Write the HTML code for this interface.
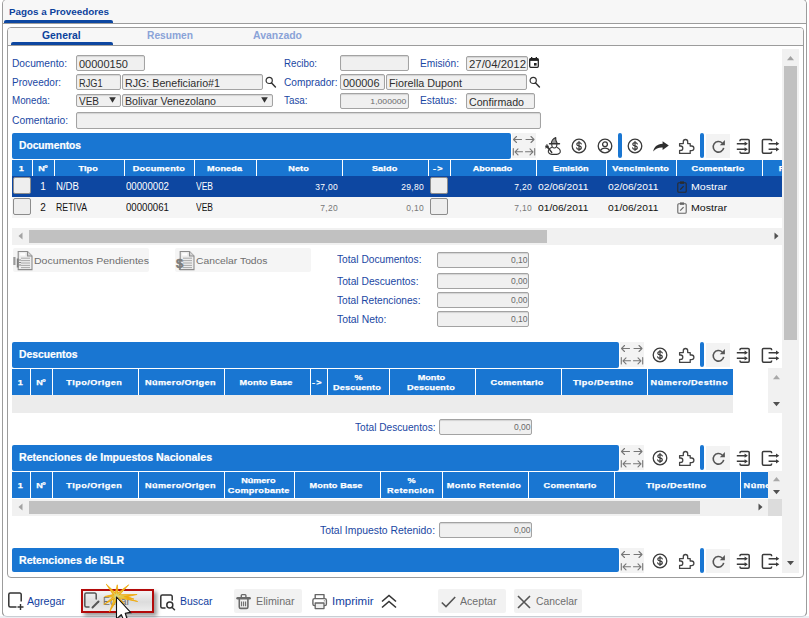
<!DOCTYPE html>
<html><head><meta charset="utf-8"><title>Pagos a Proveedores</title>
<style>
html,body{margin:0;padding:0;}
body{width:809px;height:618px;overflow:hidden;background:#fff;font-family:"Liberation Sans",sans-serif;font-size:11px;position:relative;}
.a{position:absolute;box-sizing:border-box;}
.t{white-space:nowrap;line-height:14px;height:14px;}
.lbl{color:#1a47a3;font-size:10px;}
.inp{background:#f0f0f0;border:1px solid #a3a3a3;border-radius:2px;color:#2e2e2e;font-size:10px;line-height:13px;padding:1.7px 0 0 2px;white-space:nowrap;overflow:hidden;box-shadow:inset 0 1px 1px rgba(0,0,0,0.12);}
.num{text-align:right;padding-right:0.7px;color:#6a6a6a;font-size:8.5px;letter-spacing:0.3px;}
.bar{background:#1976d2;border-radius:2px;}
.bart{color:#fff;font-weight:bold;font-size:10px;-webkit-text-stroke:0.2px #fff;}
.th{background:#1976d2;color:#fff;font-weight:bold;font-size:7.6px;text-align:center;display:flex;padding:1.6px 2.2px 0 0;-webkit-text-stroke:0.25px #fff;align-items:center;justify-content:center;line-height:10px;white-space:nowrap;overflow:hidden;}
.vb{background:#1976d2;border-radius:2px;}
.ibg{background:#f3f3f3;}
.chk{background:#eeeeee;border:1px solid #8c8c8c;border-radius:2px;}
.btn{background:#f2f2f2;border-radius:2px;}
.gtx{color:#6e6e6e;font-size:10px;}
.btx{color:#123e9e;font-size:10px;}
svg{position:absolute;overflow:visible;}
</style></head>
<body>
<div class="a " style="left:2px;top:-1px;width:805px;height:618px;border:1px solid #9c9c9c;border-bottom-color:#c9ced4;border-radius:5px;background:#fff;overflow:hidden;"><div class="a" style="left:0;top:0;width:100%;height:24px;background:#f7f7f7;border-bottom:1px solid #9c9c9c;"></div></div>
<div class="a " style="left:0px;top:616px;width:809px;height:2px;background:#eceff3;"></div>
<div class="a " style="left:2px;top:560px;width:805px;height:57px;border:1px solid #9c9c9c;border-top:none;border-bottom-color:#c9ced4;border-radius:0 0 5px 5px;"></div>
<div class="a t " style="left:9px;top:4.7px;color:#0c429c;font-weight:bold;font-size:9.4px;"><span style="display:inline-block;transform:scaleX(1.049);transform-origin:0 50%;">Pagos a Proveedores</span></div>
<div class="a " style="left:4px;top:20px;width:109px;height:3px;background:#0d47a1;border-radius:2px 2px 0 0;"></div>
<div class="a " style="left:7px;top:27px;width:797px;height:551px;border:1px solid #9c9c9c;border-radius:4px;background:#fff;overflow:hidden;"><div class="a" style="left:0;top:0;width:100%;height:18px;background:#f7f7f7;border-bottom:1px solid #9c9c9c;"></div></div>
<div class="a t " style="left:42px;top:29px;color:#0c429c;font-weight:bold;font-size:10px;"><span style="display:inline-block;transform:scaleX(1.036);transform-origin:0 50%;">General</span></div>
<div class="a t " style="left:146.5px;top:29px;color:#8aa3d8;font-weight:bold;font-size:10px;"><span style="display:inline-block;transform:scaleX(1.022);transform-origin:0 50%;">Resumen</span></div>
<div class="a t " style="left:253px;top:29px;color:#8aa3d8;font-weight:bold;font-size:10px;"><span style="display:inline-block;transform:scaleX(1.045);transform-origin:0 50%;">Avanzado</span></div>
<div class="a " style="left:11px;top:42px;width:102px;height:3px;background:#0d47a1;border-radius:2px 2px 0 0;"></div>
<div class="a t lbl" style="left:12px;top:56.5px;"><span style="display:inline-block;transform:scaleX(1.020);transform-origin:0 50%;">Documento:</span></div>
<div class="a t lbl" style="left:12px;top:75.5px;"><span style="display:inline-block;transform:scaleX(1.002);transform-origin:0 50%;">Proveedor:</span></div>
<div class="a t lbl" style="left:12px;top:94px;"><span style="display:inline-block;transform:scaleX(0.976);transform-origin:0 50%;">Moneda:</span></div>
<div class="a t lbl" style="left:12px;top:113.5px;"><span style="display:inline-block;transform:scaleX(1.028);transform-origin:0 50%;">Comentario:</span></div>
<div class="a t lbl" style="left:284px;top:56.7px;"><span style="display:inline-block;transform:scaleX(0.973);transform-origin:0 50%;">Recibo:</span></div>
<div class="a t lbl" style="left:284px;top:75.5px;"><span style="display:inline-block;transform:scaleX(1.013);transform-origin:0 50%;">Comprador:</span></div>
<div class="a t lbl" style="left:284px;top:94.2px;"><span style="display:inline-block;transform:scaleX(0.983);transform-origin:0 50%;">Tasa:</span></div>
<div class="a t lbl" style="left:420px;top:56.5px;"><span style="display:inline-block;transform:scaleX(1.017);transform-origin:0 50%;">Emisión:</span></div>
<div class="a t lbl" style="left:420px;top:94.2px;"><span style="display:inline-block;transform:scaleX(1.024);transform-origin:0 50%;">Estatus:</span></div>
<div class="a inp" style="left:76px;top:55px;width:69px;height:16px;"><span style="display:inline-block;transform:scaleX(1.101);transform-origin:0 50%;">00000150</span></div>
<div class="a inp" style="left:76px;top:74px;width:45px;height:16px;"><span style="display:inline-block;transform:scaleX(0.919);transform-origin:0 50%;">RJG1</span></div>
<div class="a inp" style="left:122px;top:74px;width:141px;height:16px;"><span style="display:inline-block;transform:scaleX(1.068);transform-origin:0 50%;">RJG: Beneficiario#1</span></div>
<div class="a inp" style="left:76px;top:94px;width:45px;height:13px;line-height:11px;padding-top:1.4px;"><span style="display:inline-block;transform:scaleX(0.999);transform-origin:0 50%;">VEB</span><svg style="right:4px;top:2.2px" width="7" height="6" viewBox="0 0 7 6"><path d="M0.2 0.2H6.8L3.5 5.8Z" fill="#333"/></svg></div>
<div class="a inp" style="left:122px;top:94px;width:151px;height:13px;line-height:11px;padding-top:1.4px;"><span style="display:inline-block;transform:scaleX(1.063);transform-origin:0 50%;">Bolivar Venezolano</span><svg style="right:4px;top:2.2px" width="7" height="6" viewBox="0 0 7 6"><path d="M0.2 0.2H6.8L3.5 5.8Z" fill="#333"/></svg></div>
<div class="a inp" style="left:76px;top:112px;width:465px;height:17px;"></div>
<div class="a inp" style="left:340px;top:55px;width:69px;height:16px;"></div>
<div class="a inp" style="left:340px;top:74px;width:45px;height:16px;"><span style="display:inline-block;transform:scaleX(1.094);transform-origin:0 50%;">000006</span></div>
<div class="a inp" style="left:386px;top:74px;width:141px;height:16px;"><span style="display:inline-block;transform:scaleX(1.076);transform-origin:0 50%;">Fiorella Dupont</span></div>
<div class="a inp num" style="left:340px;top:93px;width:69px;height:16px;font-size:8px;line-height:13px;padding-top:1px;letter-spacing:0;padding-right:1.5px;"><span style="display:inline-block;transform:scaleX(1.079);transform-origin:100% 50%;">1,000000</span></div>
<div class="a inp" style="left:466px;top:56px;width:62px;height:15px;padding-top:0.7px;line-height:13px;"><span style="display:inline-block;transform:scaleX(1.139);transform-origin:0 50%;">27/04/2012</span></div>
<div class="a inp" style="left:466px;top:93px;width:69px;height:16px;"><span style="display:inline-block;transform:scaleX(1.064);transform-origin:0 50%;">Confirmado</span></div>
<svg style="left:265px;top:76px" width="12" height="12" viewBox="0 0 12 12"><circle cx="4.2" cy="4.4" r="3.1" fill="none" stroke="#333" stroke-width="1.2"/><path d="M6.6 6.9 L10.4 10.9" stroke="#333" stroke-width="1.5" stroke-linecap="round"/></svg>
<svg style="left:529px;top:76px" width="12" height="12" viewBox="0 0 12 12"><circle cx="4.2" cy="4.4" r="3.1" fill="none" stroke="#333" stroke-width="1.2"/><path d="M6.6 6.9 L10.4 10.9" stroke="#333" stroke-width="1.5" stroke-linecap="round"/></svg>
<svg style="left:529px;top:57px" width="10" height="11" viewBox="0 0 10 11"><rect x="0.7" y="1.7" width="8.6" height="8.6" rx="1" fill="none" stroke="#222" stroke-width="1.3"/><rect x="0.7" y="1.7" width="8.6" height="2.2" fill="#222"/><rect x="2" y="0" width="1.3" height="2" fill="#222"/><rect x="6.7" y="0" width="1.3" height="2" fill="#222"/><rect x="5" y="6" width="2.6" height="2.6" fill="#222"/></svg>
<div class="a bar" style="left:12px;top:133px;width:499px;height:26px;"></div>
<div class="a t bart" style="left:18.5px;top:139px;"><span style="display:inline-block;transform:scaleX(1.024);transform-origin:0 50%;">Documentos</span></div>
<div class="a ibg" style="left:512px;top:133px;width:24px;height:25px;"></div>
<svg style="left:512px;top:133px" width="24" height="25" viewBox="0 0 24 25" fill="none" stroke="#777" stroke-width="1.1" stroke-linecap="round" stroke-linejoin="round"><path d="M1.5 6.5H9.5M4.5 3.5L1.5 6.5L4.5 9.5"/><path d="M14 6.5H22M19 3.5L22 6.5L19 9.5"/><path d="M1.3 15.5V22M3 18.8H10.5M6 15.8L3 18.8L6 21.8"/><path d="M22.7 15.5V22M21 18.8H13.5M18 15.8L21 18.8L18 21.8"/></svg>
<svg style="left:544.6px;top:137.4px" width="17" height="18" viewBox="0 0 17 18" fill="none" stroke="#333" stroke-width="1.1" stroke-linejoin="round" stroke-linecap="round"><path d="M6.3 6.5C6.6 3.8 8.3 1.6 10.8 0.6C10.2 2.6 11.2 4.6 12.3 6.5Z" fill="#999"/><path d="M4.6 6.8H14.4" stroke-width="1.6"/><path d="M6.8 7.3C6.6 9.6 7.6 11 9.3 11C11 11 12 9.6 11.8 7.3"/><path d="M6.5 10.5C4.2 11.5 3 13.2 3.4 15.2C4 16.8 6.5 17.4 9.3 17.4C12.1 17.4 14.6 16.8 15.2 15.2C15.6 13.2 14.4 11.5 12.1 10.5"/><path d="M2.3 9.5L6.8 15.5" stroke-width="1.3"/><path d="M2 7.6L2.4 9L3.8 9.2L2.6 10L2.9 11.4L1.8 10.5L0.6 11.2L1.1 9.9L0.2 9L1.5 8.9Z" fill="#333" stroke-width="0.6"/></svg>
<svg style="left:570.5px;top:138px" width="16" height="16" viewBox="0 0 16 16"><circle cx="8" cy="8" r="6.8" fill="none" stroke="#3a3a3a" stroke-width="1.3"/><path d="M10.3 5.9C10 5 9.2 4.6 8 4.6C6.7 4.6 5.8 5.2 5.8 6.2C5.8 7.2 6.6 7.6 8 7.9C9.5 8.2 10.3 8.7 10.3 9.7C10.3 10.8 9.3 11.4 8 11.4C6.7 11.4 5.8 10.9 5.6 9.9M8 3.4V12.6" fill="none" stroke="#3a3a3a" stroke-width="1.2" stroke-linecap="round"/></svg>
<svg style="left:596.5px;top:138px" width="16" height="16" viewBox="0 0 16 16" fill="none" stroke="#3a3a3a" stroke-width="1.3"><circle cx="8" cy="8" r="6.8"/><circle cx="8" cy="6.3" r="2.4"/><path d="M3.4 12.7C4.4 10.9 6 10.2 8 10.2C10 10.2 11.6 10.9 12.6 12.7"/></svg>
<div class="a vb" style="left:618px;top:133px;width:4px;height:25px;"></div>
<svg style="left:626.5px;top:138px" width="16" height="16" viewBox="0 0 16 16"><circle cx="8" cy="8" r="6.8" fill="none" stroke="#3a3a3a" stroke-width="1.3"/><path d="M10.3 5.9C10 5 9.2 4.6 8 4.6C6.7 4.6 5.8 5.2 5.8 6.2C5.8 7.2 6.6 7.6 8 7.9C9.5 8.2 10.3 8.7 10.3 9.7C10.3 10.8 9.3 11.4 8 11.4C6.7 11.4 5.8 10.9 5.6 9.9M8 3.4V12.6" fill="none" stroke="#3a3a3a" stroke-width="1.2" stroke-linecap="round"/></svg>
<svg style="left:653px;top:141px" width="16" height="11" viewBox="0 0 16 11"><path d="M9.6 0.2L15.8 4.6L9.6 9V6.4C5.6 6.2 2.6 7.4 0.2 10.6C0.9 6.2 4 2.9 9.6 2.7Z" fill="#2e2e2e"/></svg>
<svg style="left:678px;top:139px" width="17" height="16" viewBox="678 139 17 16" fill="none" stroke="#444" stroke-width="1.3" stroke-linejoin="round"><path d="M679.6 143.6H683.3V141.7A2.2 2.2 0 0 1 687.7 141.7V143.6H690.2V146H691.6A2.3 2.3 0 0 1 691.6 150.6H690.2V153.4H679.6V150.4H680.6A2.2 2.2 0 0 0 680.6 146H679.6Z"/></svg>
<div class="a vb" style="left:700px;top:133px;width:4px;height:25px;"></div>
<div class="a ibg" style="left:706px;top:134px;width:24px;height:24px;"></div>
<svg style="left:706px;top:134px" width="24" height="24" viewBox="706 134 24 24" fill="none" stroke="#555" stroke-width="1.6"><path d="M722.2 143A5.3 5.3 0 1 0 723.7 147.9"/><path d="M719.8 145.2L724.9 140.1V145.2Z" fill="#555" stroke="none"/></svg>
<svg style="left:736px;top:138px" width="15" height="17" viewBox="736 138 15 17" fill="none" stroke="#3a3a3a" stroke-width="1.5" stroke-linejoin="round"><path d="M740 141.2V140.6C740 139.8 740.5 139.4 741.2 139.4H748C748.8 139.4 749.2 139.9 749.2 140.6V152C749.2 152.8 748.8 153.2 748 153.2H741.2C740.5 153.2 740 152.8 740 152V151.4"/><path d="M736.8 143.7H745M736.8 149.3H745" stroke-width="1.4"/><path d="M744.6 141.6L747.9 143.7L744.6 145.8ZM744.6 147.2L747.9 149.3L744.6 151.4Z" fill="#3a3a3a" stroke="none"/></svg>
<svg style="left:761px;top:138px" width="20" height="17" viewBox="761 138 20 17" fill="none" stroke="#3a3a3a" stroke-width="1.5" stroke-linejoin="round"><path d="M771.6 141.2V140.6C771.6 139.8 771.1 139.4 770.4 139.4H763.6C762.8 139.4 762.4 139.9 762.4 140.6V152C762.4 152.8 762.8 153.2 763.6 153.2H770.4C771.1 153.2 771.6 152.8 771.6 152V151.4"/><path d="M768.6 143.7H776.5M768.6 149.3H776.5" stroke-width="1.4"/><path d="M776 141.6L779.3 143.7L776 145.8ZM776 147.2L779.3 149.3L776 151.4Z" fill="#3a3a3a" stroke="none"/></svg>
<div class="a th" style="left:12px;top:160px;width:20px;height:16px;"><div><span style="display:inline-block;letter-spacing:-1.22px;transform:scaleX(1.200);transform-origin:50% 50%;">1</span></div></div>
<div class="a th" style="left:33px;top:160px;width:21px;height:16px;"><div><span style="display:inline-block;letter-spacing:-0.38px;transform:scaleX(1.200);transform-origin:50% 50%;">Nº</span></div></div>
<div class="a th" style="left:55px;top:160px;width:69px;height:16px;"><div><span style="display:inline-block;letter-spacing:0.09px;transform:scaleX(1.200);transform-origin:50% 50%;">Tipo</span></div></div>
<div class="a th" style="left:125px;top:160px;width:69px;height:16px;"><div><span style="display:inline-block;letter-spacing:0.22px;transform:scaleX(1.200);transform-origin:50% 50%;">Documento</span></div></div>
<div class="a th" style="left:195px;top:160px;width:61px;height:16px;"><div><span style="display:inline-block;letter-spacing:0.08px;transform:scaleX(1.200);transform-origin:50% 50%;">Moneda</span></div></div>
<div class="a th" style="left:257px;top:160px;width:85px;height:16px;"><div><span style="display:inline-block;letter-spacing:0.05px;transform:scaleX(1.200);transform-origin:50% 50%;">Neto</span></div></div>
<div class="a th" style="left:343px;top:160px;width:85px;height:16px;"><div><span style="display:inline-block;letter-spacing:0.11px;transform:scaleX(1.200);transform-origin:50% 50%;">Saldo</span></div></div>
<div class="a th" style="left:429px;top:160px;width:21px;height:16px;"><div><span style="display:inline-block;letter-spacing:0.93px;transform:scaleX(1.200);transform-origin:50% 50%;">-&gt;</span></div></div>
<div class="a th" style="left:451px;top:160px;width:85px;height:16px;"><div><span style="display:inline-block;letter-spacing:0.00px;transform:scaleX(1.200);transform-origin:50% 50%;">Abonado</span></div></div>
<div class="a th" style="left:537px;top:160px;width:69px;height:16px;"><div><span style="display:inline-block;letter-spacing:0.02px;transform:scaleX(1.200);transform-origin:50% 50%;">Emisión</span></div></div>
<div class="a th" style="left:607px;top:160px;width:69px;height:16px;"><div><span style="display:inline-block;letter-spacing:0.25px;transform:scaleX(1.200);transform-origin:50% 50%;">Vencimiento</span></div></div>
<div class="a th" style="left:677px;top:160px;width:85px;height:16px;"><div><span style="display:inline-block;letter-spacing:0.20px;transform:scaleX(1.200);transform-origin:50% 50%;">Comentario</span></div></div>
<div class="a th" style="left:763px;top:160px;width:19px;height:16px;justify-content:flex-start;padding-left:16.2px;"><div><span style="display:inline-block;letter-spacing:-1.34px;transform:scaleX(1.200);transform-origin:50% 50%;">F</span></div></div>
<div class="a " style="left:12px;top:176px;width:770px;height:21px;background:#0d47a1;"></div>
<div class="a " style="left:12px;top:197px;width:770px;height:21px;background:#f5f5f5;"></div>
<div class="a chk" style="left:13px;top:177px;width:18px;height:17px;"></div>
<div class="a chk" style="left:13px;top:198px;width:18px;height:17px;"></div>
<div class="a chk" style="left:430px;top:177px;width:18px;height:17px;"></div>
<div class="a chk" style="left:430px;top:198px;width:18px;height:17px;"></div>
<div class="a t " style="left:33px;top:180.4px;width:12.7px;color:#fff;font-size:10px;text-align:right;">1</div>
<div class="a t " style="left:55.5px;top:180.4px;color:#fff;font-size:10px;"><span style="display:inline-block;transform:scaleX(0.962);transform-origin:0 50%;">N/DB</span></div>
<div class="a t " style="left:126px;top:180.4px;color:#fff;font-size:10px;"><span style="display:inline-block;transform:scaleX(0.966);transform-origin:0 50%;">00000002</span></div>
<div class="a t " style="left:195.5px;top:180.4px;color:#fff;font-size:10px;"><span style="display:inline-block;transform:scaleX(0.849);transform-origin:0 50%;">VEB</span></div>
<div class="a t " style="left:287px;top:180.4px;width:51px;color:#fff;font-size:8.5px;text-align:right;letter-spacing:0.3px;">37,00</div>
<div class="a t " style="left:373px;top:180.4px;width:51px;color:#fff;font-size:8.5px;text-align:right;letter-spacing:0.3px;">29,80</div>
<div class="a t " style="left:481px;top:180.4px;width:51px;color:#fff;font-size:8.5px;text-align:right;letter-spacing:0.3px;">7,20</div>
<div class="a t " style="left:538px;top:179.8px;color:#fff;font-size:9.6px;"><span style="display:inline-block;transform:scaleX(1.067);transform-origin:0 50%;">02/06/2011</span></div>
<div class="a t " style="left:608px;top:179.8px;color:#fff;font-size:9.6px;"><span style="display:inline-block;transform:scaleX(1.067);transform-origin:0 50%;">02/06/2011</span></div>
<svg style="left:677px;top:181.0px" width="10" height="12" viewBox="0 0 10 12" fill="none" stroke="#2b2b2b" stroke-width="1.1"><rect x="0.8" y="1.8" width="8.4" height="9.4" rx="1"/><rect x="3" y="0.4" width="4" height="2.4" fill="#2b2b2b" stroke="none"/><path d="M3.2 8.6L6.6 5.2" stroke-width="1.2"/></svg>
<div class="a t " style="left:690.5px;top:179.8px;color:#fff;font-size:9.6px;"><span style="display:inline-block;transform:scaleX(1.107);transform-origin:0 50%;">Mostrar</span></div>
<div class="a t " style="left:33px;top:201.4px;width:12.7px;color:#111;font-size:10px;text-align:right;">2</div>
<div class="a t " style="left:55.5px;top:201.4px;color:#111;font-size:10px;"><span style="display:inline-block;transform:scaleX(0.876);transform-origin:0 50%;">RETIVA</span></div>
<div class="a t " style="left:126px;top:201.4px;color:#111;font-size:10px;"><span style="display:inline-block;transform:scaleX(0.966);transform-origin:0 50%;">00000061</span></div>
<div class="a t " style="left:195.5px;top:201.4px;color:#111;font-size:10px;"><span style="display:inline-block;transform:scaleX(0.849);transform-origin:0 50%;">VEB</span></div>
<div class="a t " style="left:287px;top:201.4px;width:51px;color:#777;font-size:8.5px;text-align:right;letter-spacing:0.3px;">7,20</div>
<div class="a t " style="left:373px;top:201.4px;width:51px;color:#777;font-size:8.5px;text-align:right;letter-spacing:0.3px;">0,10</div>
<div class="a t " style="left:481px;top:201.4px;width:51px;color:#777;font-size:8.5px;text-align:right;letter-spacing:0.3px;">7,10</div>
<div class="a t " style="left:538px;top:200.8px;color:#111;font-size:9.6px;"><span style="display:inline-block;transform:scaleX(1.067);transform-origin:0 50%;">01/06/2011</span></div>
<div class="a t " style="left:608px;top:200.8px;color:#111;font-size:9.6px;"><span style="display:inline-block;transform:scaleX(1.067);transform-origin:0 50%;">01/06/2011</span></div>
<svg style="left:677px;top:202.0px" width="10" height="12" viewBox="0 0 10 12" fill="none" stroke="#666" stroke-width="1.1"><rect x="0.8" y="1.8" width="8.4" height="9.4" rx="1"/><rect x="3" y="0.4" width="4" height="2.4" fill="#666" stroke="none"/><path d="M3.2 8.6L6.6 5.2" stroke-width="1.2"/></svg>
<div class="a t " style="left:690.5px;top:200.8px;color:#111;font-size:9.6px;"><span style="display:inline-block;transform:scaleX(1.107);transform-origin:0 50%;">Mostrar</span></div>
<div class="a " style="left:12px;top:228px;width:770px;height:17px;background:#f1f1f1;"></div>
<div class="a " style="left:29px;top:230px;width:518px;height:13px;background:#c1c1c1;"></div>
<svg style="left:18px;top:232px" width="5" height="8" viewBox="0 0 5 8"><path d="M4.5 0.5L0.5 4L4.5 7.5Z" fill="#a3a3a3"/></svg>
<svg style="left:774px;top:232px" width="5" height="8" viewBox="0 0 5 8"><path d="M0.5 0.5L4.5 4L0.5 7.5Z" fill="#505050"/></svg>
<div class="a btn" style="left:13px;top:248px;width:136px;height:24px;background:#f5f5f5;"></div>
<div class="a btn" style="left:175px;top:248px;width:136px;height:24px;background:#f5f5f5;"></div>
<svg style="left:13px;top:248px" width="20" height="24" viewBox="0 0 20 24" fill="none" stroke="#8c8c8c" stroke-width="1.1" font-family="Liberation Sans"><path d="M5.2 3.5H14.5L19 8V21.6H5.2Z" fill="#ededed"/><path d="M14.5 3.5V8H19" fill="#d6d6d6"/><rect x="7.2" y="5.3" width="5" height="2.2" fill="#fff" stroke="none"/><path d="M8 10.2H17M8 12.6H17M8 15H17M8 17.4H17M8 19.6H17" stroke="#a8a8a8" stroke-width="1"/><rect x="0.3" y="9" width="2.2" height="8" fill="#9a9a9a" stroke="none"/><rect x="3.8" y="10.5" width="1.8" height="9" fill="#7f7f7f" stroke="none"/><path d="M5.6 12H8M5.6 14.5H8M5.6 17H8" stroke="#8a8a8a" stroke-width="1"/></svg>
<svg style="left:175px;top:248px" width="20" height="24" viewBox="0 0 20 24" fill="none" stroke="#8c8c8c" stroke-width="1.1" font-family="Liberation Sans"><path d="M5.2 3.5H14.5L19 8V21.6H5.2Z" fill="#ededed"/><path d="M14.5 3.5V8H19" fill="#d6d6d6"/><rect x="7.2" y="5.3" width="5" height="2.2" fill="#fff" stroke="none"/><path d="M8 10.2H17M8 12.6H17M8 15H17M8 17.4H17M8 19.6H17" stroke="#a8a8a8" stroke-width="1"/><text x="4.6" y="20.2" font-size="13" font-weight="bold" fill="#7d7d7d" stroke="#7d7d7d" stroke-width="0.5" text-anchor="middle" font-family="Liberation Sans">$</text></svg>
<div class="a t gtx" style="left:34px;top:254px;font-size:9.2px;"><span style="display:inline-block;transform:scaleX(1.149);transform-origin:0 50%;">Documentos Pendientes</span></div>
<div class="a t gtx" style="left:196px;top:254px;font-size:9.2px;"><span style="display:inline-block;transform:scaleX(1.123);transform-origin:0 50%;">Cancelar Todos</span></div>
<div class="a t lbl" style="left:337px;top:253px;"><span style="display:inline-block;transform:scaleX(1.020);transform-origin:0 50%;">Total Documentos:</span></div>
<div class="a inp num" style="left:437px;top:252px;width:92px;height:16px;line-height:13px;padding-top:0.8px;letter-spacing:0;"><span style="display:inline-block;transform:scaleX(1.003);transform-origin:100% 50%;">0,10</span></div>
<div class="a t lbl" style="left:337px;top:274.5px;"><span style="display:inline-block;transform:scaleX(1.025);transform-origin:0 50%;">Total Descuentos:</span></div>
<div class="a inp num" style="left:437px;top:273px;width:92px;height:16px;line-height:13px;padding-top:0.8px;letter-spacing:0;"><span style="display:inline-block;transform:scaleX(1.003);transform-origin:100% 50%;">0,00</span></div>
<div class="a t lbl" style="left:337px;top:294px;"><span style="display:inline-block;transform:scaleX(1.015);transform-origin:0 50%;">Total Retenciones:</span></div>
<div class="a inp num" style="left:437px;top:292px;width:92px;height:16px;line-height:13px;padding-top:0.8px;letter-spacing:0;"><span style="display:inline-block;transform:scaleX(1.003);transform-origin:100% 50%;">0,00</span></div>
<div class="a t lbl" style="left:337px;top:313px;"><span style="display:inline-block;transform:scaleX(1.035);transform-origin:0 50%;">Total Neto:</span></div>
<div class="a inp num" style="left:437px;top:311px;width:92px;height:16px;line-height:13px;padding-top:0.8px;letter-spacing:0;"><span style="display:inline-block;transform:scaleX(1.003);transform-origin:100% 50%;">0,10</span></div>
<div class="a bar" style="left:12px;top:342px;width:607px;height:26px;"></div>
<div class="a t bart" style="left:18.5px;top:348px;"><span style="display:inline-block;transform:scaleX(1.032);transform-origin:0 50%;">Descuentos</span></div>
<div class="a ibg" style="left:620px;top:342px;width:24px;height:25px;"></div>
<svg style="left:620px;top:342px" width="24" height="25" viewBox="0 0 24 25" fill="none" stroke="#777" stroke-width="1.1" stroke-linecap="round" stroke-linejoin="round"><path d="M1.5 6.5H9.5M4.5 3.5L1.5 6.5L4.5 9.5"/><path d="M14 6.5H22M19 3.5L22 6.5L19 9.5"/><path d="M1.3 15.5V22M3 18.8H10.5M6 15.8L3 18.8L6 21.8"/><path d="M22.7 15.5V22M21 18.8H13.5M18 15.8L21 18.8L18 21.8"/></svg>
<svg style="left:652px;top:347px" width="16" height="16" viewBox="0 0 16 16"><circle cx="8" cy="8" r="6.8" fill="none" stroke="#3a3a3a" stroke-width="1.3"/><path d="M10.3 5.9C10 5 9.2 4.6 8 4.6C6.7 4.6 5.8 5.2 5.8 6.2C5.8 7.2 6.6 7.6 8 7.9C9.5 8.2 10.3 8.7 10.3 9.7C10.3 10.8 9.3 11.4 8 11.4C6.7 11.4 5.8 10.9 5.6 9.9M8 3.4V12.6" fill="none" stroke="#3a3a3a" stroke-width="1.2" stroke-linecap="round"/></svg>
<svg style="left:678px;top:348px" width="17" height="16" viewBox="678 139 17 16" fill="none" stroke="#444" stroke-width="1.3" stroke-linejoin="round"><path d="M679.6 143.6H683.3V141.7A2.2 2.2 0 0 1 687.7 141.7V143.6H690.2V146H691.6A2.3 2.3 0 0 1 691.6 150.6H690.2V153.4H679.6V150.4H680.6A2.2 2.2 0 0 0 680.6 146H679.6Z"/></svg>
<div class="a vb" style="left:700px;top:342px;width:4px;height:25px;"></div>
<div class="a ibg" style="left:706px;top:343px;width:24px;height:24px;"></div>
<svg style="left:706px;top:343px" width="24" height="24" viewBox="706 134 24 24" fill="none" stroke="#555" stroke-width="1.6"><path d="M722.2 143A5.3 5.3 0 1 0 723.7 147.9"/><path d="M719.8 145.2L724.9 140.1V145.2Z" fill="#555" stroke="none"/></svg>
<svg style="left:736px;top:347px" width="15" height="17" viewBox="736 138 15 17" fill="none" stroke="#3a3a3a" stroke-width="1.5" stroke-linejoin="round"><path d="M740 141.2V140.6C740 139.8 740.5 139.4 741.2 139.4H748C748.8 139.4 749.2 139.9 749.2 140.6V152C749.2 152.8 748.8 153.2 748 153.2H741.2C740.5 153.2 740 152.8 740 152V151.4"/><path d="M736.8 143.7H745M736.8 149.3H745" stroke-width="1.4"/><path d="M744.6 141.6L747.9 143.7L744.6 145.8ZM744.6 147.2L747.9 149.3L744.6 151.4Z" fill="#3a3a3a" stroke="none"/></svg>
<svg style="left:761px;top:347px" width="20" height="17" viewBox="761 138 20 17" fill="none" stroke="#3a3a3a" stroke-width="1.5" stroke-linejoin="round"><path d="M771.6 141.2V140.6C771.6 139.8 771.1 139.4 770.4 139.4H763.6C762.8 139.4 762.4 139.9 762.4 140.6V152C762.4 152.8 762.8 153.2 763.6 153.2H770.4C771.1 153.2 771.6 152.8 771.6 152V151.4"/><path d="M768.6 143.7H776.5M768.6 149.3H776.5" stroke-width="1.4"/><path d="M776 141.6L779.3 143.7L776 145.8ZM776 147.2L779.3 149.3L776 151.4Z" fill="#3a3a3a" stroke="none"/></svg>
<div class="a th" style="left:12px;top:369px;width:18px;height:26px;"><div><span style="display:inline-block;letter-spacing:-1.22px;transform:scaleX(1.200);transform-origin:50% 50%;">1</span></div></div>
<div class="a th" style="left:31px;top:369px;width:21px;height:26px;"><div><span style="display:inline-block;letter-spacing:-0.38px;transform:scaleX(1.200);transform-origin:50% 50%;">Nº</span></div></div>
<div class="a th" style="left:53px;top:369px;width:85px;height:26px;"><div><span style="display:inline-block;letter-spacing:0.38px;transform:scaleX(1.200);transform-origin:50% 50%;">Tipo/Origen</span></div></div>
<div class="a th" style="left:139px;top:369px;width:85px;height:26px;"><div><span style="display:inline-block;letter-spacing:0.28px;transform:scaleX(1.200);transform-origin:50% 50%;">Número/Origen</span></div></div>
<div class="a th" style="left:225px;top:369px;width:85px;height:26px;"><div><span style="display:inline-block;letter-spacing:0.11px;transform:scaleX(1.200);transform-origin:50% 50%;">Monto Base</span></div></div>
<div class="a th" style="left:311px;top:369px;width:16px;height:26px;"><div><span style="display:inline-block;letter-spacing:0.93px;transform:scaleX(1.200);transform-origin:50% 50%;">-&gt;</span></div></div>
<div class="a th" style="left:328px;top:369px;width:61px;height:26px;"><div><span style="display:inline-block;letter-spacing:-1.95px;transform:scaleX(1.200);transform-origin:50% 50%;">%</span><br><span style="display:inline-block;letter-spacing:0.13px;transform:scaleX(1.200);transform-origin:50% 50%;">Descuento</span></div></div>
<div class="a th" style="left:390px;top:369px;width:85px;height:26px;"><div><span style="display:inline-block;letter-spacing:-0.01px;transform:scaleX(1.200);transform-origin:50% 50%;">Monto</span><br><span style="display:inline-block;letter-spacing:0.13px;transform:scaleX(1.200);transform-origin:50% 50%;">Descuento</span></div></div>
<div class="a th" style="left:476px;top:369px;width:85px;height:26px;"><div><span style="display:inline-block;letter-spacing:0.20px;transform:scaleX(1.200);transform-origin:50% 50%;">Comentario</span></div></div>
<div class="a th" style="left:562px;top:369px;width:85px;height:26px;"><div><span style="display:inline-block;letter-spacing:0.39px;transform:scaleX(1.200);transform-origin:50% 50%;">Tipo/Destino</span></div></div>
<div class="a th" style="left:648px;top:369px;width:85px;height:26px;"><div><span style="display:inline-block;letter-spacing:0.42px;transform:scaleX(1.200);transform-origin:50% 50%;">Número/Destino</span></div></div>
<div class="a " style="left:12px;top:395px;width:721px;height:18px;background:#ececec;"></div>
<div class="a " style="left:768px;top:368px;width:14px;height:45px;background:#f1f1f1;"></div>
<svg style="left:773px;top:374.8px" width="7" height="5" viewBox="0 0 7 5"><path d="M0 4.2L3.5 0L7 4.2Z" fill="#a8a8a8"/></svg>
<svg style="left:773px;top:401.9px" width="7" height="5" viewBox="0 0 7 5"><path d="M0 0L3.5 4.2L7 0Z" fill="#505050"/></svg>
<div class="a t lbl" style="left:354.5px;top:420.5px;"><span style="display:inline-block;transform:scaleX(1.013);transform-origin:0 50%;">Total Descuentos:</span></div>
<div class="a inp num" style="left:439px;top:419px;width:93px;height:16px;line-height:13px;padding-top:0.8px;letter-spacing:0;"><span style="display:inline-block;transform:scaleX(1.003);transform-origin:100% 50%;">0,00</span></div>
<div class="a bar" style="left:12px;top:445px;width:607px;height:26px;"></div>
<div class="a t bart" style="left:18.5px;top:451px;"><span style="display:inline-block;transform:scaleX(1.059);transform-origin:0 50%;">Retenciones de Impuestos Nacionales</span></div>
<div class="a ibg" style="left:620px;top:445px;width:24px;height:25px;"></div>
<svg style="left:620px;top:445px" width="24" height="25" viewBox="0 0 24 25" fill="none" stroke="#777" stroke-width="1.1" stroke-linecap="round" stroke-linejoin="round"><path d="M1.5 6.5H9.5M4.5 3.5L1.5 6.5L4.5 9.5"/><path d="M14 6.5H22M19 3.5L22 6.5L19 9.5"/><path d="M1.3 15.5V22M3 18.8H10.5M6 15.8L3 18.8L6 21.8"/><path d="M22.7 15.5V22M21 18.8H13.5M18 15.8L21 18.8L18 21.8"/></svg>
<svg style="left:652px;top:450px" width="16" height="16" viewBox="0 0 16 16"><circle cx="8" cy="8" r="6.8" fill="none" stroke="#3a3a3a" stroke-width="1.3"/><path d="M10.3 5.9C10 5 9.2 4.6 8 4.6C6.7 4.6 5.8 5.2 5.8 6.2C5.8 7.2 6.6 7.6 8 7.9C9.5 8.2 10.3 8.7 10.3 9.7C10.3 10.8 9.3 11.4 8 11.4C6.7 11.4 5.8 10.9 5.6 9.9M8 3.4V12.6" fill="none" stroke="#3a3a3a" stroke-width="1.2" stroke-linecap="round"/></svg>
<svg style="left:678px;top:451px" width="17" height="16" viewBox="678 139 17 16" fill="none" stroke="#444" stroke-width="1.3" stroke-linejoin="round"><path d="M679.6 143.6H683.3V141.7A2.2 2.2 0 0 1 687.7 141.7V143.6H690.2V146H691.6A2.3 2.3 0 0 1 691.6 150.6H690.2V153.4H679.6V150.4H680.6A2.2 2.2 0 0 0 680.6 146H679.6Z"/></svg>
<div class="a vb" style="left:700px;top:445px;width:4px;height:25px;"></div>
<div class="a ibg" style="left:706px;top:446px;width:24px;height:24px;"></div>
<svg style="left:706px;top:446px" width="24" height="24" viewBox="706 134 24 24" fill="none" stroke="#555" stroke-width="1.6"><path d="M722.2 143A5.3 5.3 0 1 0 723.7 147.9"/><path d="M719.8 145.2L724.9 140.1V145.2Z" fill="#555" stroke="none"/></svg>
<svg style="left:736px;top:450px" width="15" height="17" viewBox="736 138 15 17" fill="none" stroke="#3a3a3a" stroke-width="1.5" stroke-linejoin="round"><path d="M740 141.2V140.6C740 139.8 740.5 139.4 741.2 139.4H748C748.8 139.4 749.2 139.9 749.2 140.6V152C749.2 152.8 748.8 153.2 748 153.2H741.2C740.5 153.2 740 152.8 740 152V151.4"/><path d="M736.8 143.7H745M736.8 149.3H745" stroke-width="1.4"/><path d="M744.6 141.6L747.9 143.7L744.6 145.8ZM744.6 147.2L747.9 149.3L744.6 151.4Z" fill="#3a3a3a" stroke="none"/></svg>
<svg style="left:761px;top:450px" width="20" height="17" viewBox="761 138 20 17" fill="none" stroke="#3a3a3a" stroke-width="1.5" stroke-linejoin="round"><path d="M771.6 141.2V140.6C771.6 139.8 771.1 139.4 770.4 139.4H763.6C762.8 139.4 762.4 139.9 762.4 140.6V152C762.4 152.8 762.8 153.2 763.6 153.2H770.4C771.1 153.2 771.6 152.8 771.6 152V151.4"/><path d="M768.6 143.7H776.5M768.6 149.3H776.5" stroke-width="1.4"/><path d="M776 141.6L779.3 143.7L776 145.8ZM776 147.2L779.3 149.3L776 151.4Z" fill="#3a3a3a" stroke="none"/></svg>
<div class="a th" style="left:12px;top:472px;width:18px;height:26px;"><div><span style="display:inline-block;letter-spacing:-1.22px;transform:scaleX(1.200);transform-origin:50% 50%;">1</span></div></div>
<div class="a th" style="left:31px;top:472px;width:21px;height:26px;"><div><span style="display:inline-block;letter-spacing:-0.38px;transform:scaleX(1.200);transform-origin:50% 50%;">Nº</span></div></div>
<div class="a th" style="left:53px;top:472px;width:85px;height:26px;"><div><span style="display:inline-block;letter-spacing:0.38px;transform:scaleX(1.200);transform-origin:50% 50%;">Tipo/Origen</span></div></div>
<div class="a th" style="left:139px;top:472px;width:85px;height:26px;"><div><span style="display:inline-block;letter-spacing:0.28px;transform:scaleX(1.200);transform-origin:50% 50%;">Número/Origen</span></div></div>
<div class="a th" style="left:225px;top:472px;width:69px;height:26px;"><div><span style="display:inline-block;letter-spacing:-0.02px;transform:scaleX(1.200);transform-origin:50% 50%;">Número</span><br><span style="display:inline-block;letter-spacing:0.19px;transform:scaleX(1.200);transform-origin:50% 50%;">Comprobante</span></div></div>
<div class="a th" style="left:295px;top:472px;width:85px;height:26px;"><div><span style="display:inline-block;letter-spacing:0.11px;transform:scaleX(1.200);transform-origin:50% 50%;">Monto Base</span></div></div>
<div class="a th" style="left:381px;top:472px;width:61px;height:26px;"><div><span style="display:inline-block;letter-spacing:-1.95px;transform:scaleX(1.200);transform-origin:50% 50%;">%</span><br><span style="display:inline-block;letter-spacing:0.27px;transform:scaleX(1.200);transform-origin:50% 50%;">Retención</span></div></div>
<div class="a th" style="left:443px;top:472px;width:85px;height:26px;"><div><span style="display:inline-block;letter-spacing:0.33px;transform:scaleX(1.200);transform-origin:50% 50%;">Monto Retenido</span></div></div>
<div class="a th" style="left:529px;top:472px;width:85px;height:26px;"><div><span style="display:inline-block;letter-spacing:0.20px;transform:scaleX(1.200);transform-origin:50% 50%;">Comentario</span></div></div>
<div class="a th" style="left:615px;top:472px;width:125px;height:26px;"><div><span style="display:inline-block;letter-spacing:0.39px;transform:scaleX(1.200);transform-origin:50% 50%;">Tipo/Destino</span></div></div>
<div class="a th" style="left:741px;top:472px;width:27px;height:26px;justify-content:flex-start;padding-left:9px;"><div><span style="display:inline-block;letter-spacing:0.42px;transform:scaleX(1.200);transform-origin:50% 50%;">Número/Destino</span></div></div>
<div class="a " style="left:768px;top:471px;width:14px;height:28px;background:#f1f1f1;"></div>
<svg style="left:773px;top:477px" width="7" height="5" viewBox="0 0 7 5"><path d="M0 4.2L3.5 0L7 4.2Z" fill="#a8a8a8"/></svg>
<svg style="left:773px;top:490.2px" width="7" height="5" viewBox="0 0 7 5"><path d="M0 0L3.5 4.2L7 0Z" fill="#505050"/></svg>
<div class="a " style="left:12px;top:499px;width:756px;height:17px;background:#f1f1f1;"></div>
<div class="a " style="left:29px;top:501px;width:671px;height:13px;background:#c1c1c1;"></div>
<svg style="left:18px;top:503px" width="5" height="8" viewBox="0 0 5 8"><path d="M4.5 0.5L0.5 4L4.5 7.5Z" fill="#a3a3a3"/></svg>
<svg style="left:758px;top:503px" width="5" height="8" viewBox="0 0 5 8"><path d="M0.5 0.5L4.5 4L0.5 7.5Z" fill="#505050"/></svg>
<div class="a " style="left:768px;top:499px;width:14px;height:17px;background:#dcdcdc;"></div>
<div class="a t lbl" style="left:320px;top:523.5px;"><span style="display:inline-block;transform:scaleX(1.040);transform-origin:0 50%;">Total Impuesto Retenido:</span></div>
<div class="a inp num" style="left:439px;top:522px;width:93px;height:16px;line-height:13px;padding-top:0.8px;letter-spacing:0;"><span style="display:inline-block;transform:scaleX(1.003);transform-origin:100% 50%;">0,00</span></div>
<div class="a bar" style="left:12px;top:548px;width:607px;height:24px;"></div>
<div class="a t bart" style="left:18.5px;top:554px;"><span style="display:inline-block;transform:scaleX(1.056);transform-origin:0 50%;">Retenciones de ISLR</span></div>
<div class="a ibg" style="left:620px;top:548px;width:24px;height:25px;"></div>
<svg style="left:620px;top:548px" width="24" height="25" viewBox="0 0 24 25" fill="none" stroke="#777" stroke-width="1.1" stroke-linecap="round" stroke-linejoin="round"><path d="M1.5 6.5H9.5M4.5 3.5L1.5 6.5L4.5 9.5"/><path d="M14 6.5H22M19 3.5L22 6.5L19 9.5"/><path d="M1.3 15.5V22M3 18.8H10.5M6 15.8L3 18.8L6 21.8"/><path d="M22.7 15.5V22M21 18.8H13.5M18 15.8L21 18.8L18 21.8"/></svg>
<svg style="left:652px;top:553px" width="16" height="16" viewBox="0 0 16 16"><circle cx="8" cy="8" r="6.8" fill="none" stroke="#3a3a3a" stroke-width="1.3"/><path d="M10.3 5.9C10 5 9.2 4.6 8 4.6C6.7 4.6 5.8 5.2 5.8 6.2C5.8 7.2 6.6 7.6 8 7.9C9.5 8.2 10.3 8.7 10.3 9.7C10.3 10.8 9.3 11.4 8 11.4C6.7 11.4 5.8 10.9 5.6 9.9M8 3.4V12.6" fill="none" stroke="#3a3a3a" stroke-width="1.2" stroke-linecap="round"/></svg>
<svg style="left:678px;top:554px" width="17" height="16" viewBox="678 139 17 16" fill="none" stroke="#444" stroke-width="1.3" stroke-linejoin="round"><path d="M679.6 143.6H683.3V141.7A2.2 2.2 0 0 1 687.7 141.7V143.6H690.2V146H691.6A2.3 2.3 0 0 1 691.6 150.6H690.2V153.4H679.6V150.4H680.6A2.2 2.2 0 0 0 680.6 146H679.6Z"/></svg>
<div class="a vb" style="left:700px;top:548px;width:4px;height:25px;"></div>
<div class="a ibg" style="left:706px;top:549px;width:24px;height:24px;"></div>
<svg style="left:706px;top:549px" width="24" height="24" viewBox="706 134 24 24" fill="none" stroke="#555" stroke-width="1.6"><path d="M722.2 143A5.3 5.3 0 1 0 723.7 147.9"/><path d="M719.8 145.2L724.9 140.1V145.2Z" fill="#555" stroke="none"/></svg>
<svg style="left:736px;top:553px" width="15" height="17" viewBox="736 138 15 17" fill="none" stroke="#3a3a3a" stroke-width="1.5" stroke-linejoin="round"><path d="M740 141.2V140.6C740 139.8 740.5 139.4 741.2 139.4H748C748.8 139.4 749.2 139.9 749.2 140.6V152C749.2 152.8 748.8 153.2 748 153.2H741.2C740.5 153.2 740 152.8 740 152V151.4"/><path d="M736.8 143.7H745M736.8 149.3H745" stroke-width="1.4"/><path d="M744.6 141.6L747.9 143.7L744.6 145.8ZM744.6 147.2L747.9 149.3L744.6 151.4Z" fill="#3a3a3a" stroke="none"/></svg>
<svg style="left:761px;top:553px" width="20" height="17" viewBox="761 138 20 17" fill="none" stroke="#3a3a3a" stroke-width="1.5" stroke-linejoin="round"><path d="M771.6 141.2V140.6C771.6 139.8 771.1 139.4 770.4 139.4H763.6C762.8 139.4 762.4 139.9 762.4 140.6V152C762.4 152.8 762.8 153.2 763.6 153.2H770.4C771.1 153.2 771.6 152.8 771.6 152V151.4"/><path d="M768.6 143.7H776.5M768.6 149.3H776.5" stroke-width="1.4"/><path d="M776 141.6L779.3 143.7L776 145.8ZM776 147.2L779.3 149.3L776 151.4Z" fill="#3a3a3a" stroke="none"/></svg>
<div class="a " style="left:782px;top:49px;width:17px;height:524px;background:#f1f1f1;"></div>
<div class="a " style="left:784px;top:66px;width:13px;height:274px;background:#c1c1c1;"></div>
<svg style="left:787px;top:55.8px" width="7" height="5" viewBox="0 0 7 5"><path d="M0 4.2L3.5 0L7 4.2Z" fill="#a3a3a3"/></svg>
<svg style="left:787px;top:560.9px" width="7" height="5" viewBox="0 0 7 5"><path d="M0 0L3.5 4.2L7 0Z" fill="#505050"/></svg>
<svg style="left:8px;top:592px" width="16" height="19" viewBox="0 0 16 19" fill="none" stroke="#333" stroke-width="1.5" stroke-linejoin="round"><path d="M13.2 9.5V2.5C13.2 1.6 12.6 1 11.7 1H2.3C1.4 1 0.8 1.6 0.8 2.5V13.5C0.8 14.4 1.4 15 2.3 15H8.5"/><path d="M12.5 12V18M9.5 15H15.5" stroke-width="1.4"/></svg>
<div class="a t btx" style="left:27px;top:595px;"><span style="display:inline-block;transform:scaleX(1.068);transform-origin:0 50%;">Agregar</span></div>
<div class="a " style="left:81px;top:589px;width:73px;height:24px;background:linear-gradient(#f4f4f4,#dcdcdc 55%,#ececec);border:2px solid #b30a0a;box-shadow:3px 3px 4px rgba(0,0,0,0.4);"></div>
<svg style="left:84px;top:592px" width="17" height="19" viewBox="0 0 17 19" fill="none" stroke="#555" stroke-width="1.5" stroke-linejoin="round" stroke-linecap="round"><path d="M12.2 7V2.5C12.2 1.6 11.6 1 10.7 1H2.3C1.4 1 0.8 1.6 0.8 2.5V13.5C0.8 14.4 1.4 15 2.3 15H5"/><path d="M8.5 15.5L14.5 9.5" stroke-width="2"/></svg>
<div class="a t gtx" style="left:103px;top:595px;"><span style="display:inline-block;transform:scaleX(1.033);transform-origin:0 50%;">Editar</span></div>
<svg style="left:160px;top:593.7px" width="16" height="17" viewBox="0 0 16 17" fill="none" stroke="#333" stroke-width="1.5" stroke-linejoin="round" stroke-linecap="round"><path d="M12.2 6V2.5C12.2 1.6 11.6 1 10.7 1H2.3C1.4 1 0.8 1.6 0.8 2.5V12.5C0.8 13.4 1.4 14 2.3 14H5"/><circle cx="9.8" cy="11" r="3"/><path d="M12 13.3L14.5 15.8"/></svg>
<div class="a t btx" style="left:179.5px;top:595px;"><span style="display:inline-block;transform:scaleX(1.044);transform-origin:0 50%;">Buscar</span></div>
<div class="a btn" style="left:234px;top:589px;width:68px;height:24px;"></div>
<svg style="left:236px;top:593px" width="16" height="17" viewBox="236 593 16 17" fill="none" stroke="#6a6a6a" stroke-width="1.6" stroke-linejoin="round" stroke-linecap="round"><path d="M237.6 598.2H249.6" stroke-width="2.6"/><path d="M241.3 597V595.4C241.3 594.9 241.6 594.6 242.1 594.6H245.1C245.6 594.6 245.9 594.9 245.9 595.4V597" stroke-width="1.4"/><path d="M239.3 599.5V607C239.3 607.9 239.8 608.4 240.7 608.4H246.5C247.4 608.4 247.9 607.9 247.9 607V599.5"/><path d="M241.6 601.5V606.3M243.6 601.5V606.3M245.6 601.5V606.3" stroke-width="1.1" stroke-linecap="butt"/></svg>
<div class="a t gtx" style="left:255.5px;top:595px;"><span style="display:inline-block;transform:scaleX(1.069);transform-origin:0 50%;">Eliminar</span></div>
<svg style="left:311px;top:593px" width="17" height="17" viewBox="311 593 17 17" fill="none" stroke="#666" stroke-width="1.4" stroke-linejoin="round"><path d="M315.2 598.5V594.6H324V598.5"/><rect x="312.9" y="598.6" width="13.5" height="7" rx="1.6" fill="#fff"/><rect x="315.2" y="603" width="8.8" height="5.6" fill="#eee" stroke-width="1.3"/><circle cx="324.3" cy="600.8" r="0.6" fill="#666" stroke="none"/></svg>
<div class="a t btx" style="left:331.5px;top:595px;"><span style="display:inline-block;transform:scaleX(1.152);transform-origin:0 50%;">Imprimir</span></div>
<svg style="left:381px;top:594px" width="16" height="15" viewBox="0 0 16 15" fill="none" stroke="#333" stroke-width="1.6" stroke-linejoin="miter"><path d="M1 7.5L8 1.5L15 7.5M1 13.5L8 7.5L15 13.5"/></svg>
<div class="a btn" style="left:438px;top:589px;width:68px;height:24px;"></div>
<svg style="left:441px;top:596px" width="15" height="12" viewBox="0 0 15 12" fill="none" stroke="#555" stroke-width="1.6"><path d="M0.8 6.5L5 10.5L14.2 1"/></svg>
<div class="a t gtx" style="left:459.5px;top:595px;"><span style="display:inline-block;transform:scaleX(1.059);transform-origin:0 50%;">Aceptar</span></div>
<div class="a btn" style="left:514px;top:589px;width:68px;height:24px;"></div>
<svg style="left:517px;top:595px" width="14" height="14" viewBox="0 0 14 14" fill="none" stroke="#555" stroke-width="1.6"><path d="M1 1L13 13M13 1L1 13"/></svg>
<div class="a t gtx" style="left:535.5px;top:595px;"><span style="display:inline-block;transform:scaleX(1.034);transform-origin:0 50%;">Cancelar</span></div>
<svg style="left:0;top:0" width="809" height="618" viewBox="0 0 809 618"><path d="M106.3 584.2 L115.3 592.7 L117.3 584.8 L118.0 592.9 L128.7 584.8 L119.7 594.7 L137.1 594.5 L127.4 596.6 L133.9 599.1 L127.2 598.4 L137.7 601.5 L119.5 597.9 L123.9 603.6 L117.1 599.6 L109.6 611.7 L114.1 598.9 L104.0 604.5 L113.0 597.2 L104.7 596.5 L113.1 594.6Z" fill="#f0a90c" stroke="#f0a90c" stroke-width="0.8" stroke-linejoin="round"/><path d="M110.1 588.7 L115.7 594.0 L117.0 589.1 L117.4 594.1 L124.0 589.1 L118.4 595.2 L129.2 595.1 L123.2 596.4 L127.2 598.0 L123.1 597.5 L129.6 599.4 L118.3 597.2 L121.1 600.8 L116.8 598.3 L112.2 605.8 L115.0 597.8 L108.7 601.3 L114.3 596.8 L109.1 596.3 L114.4 595.2Z" fill="#e3c84a"/><path d="M113.4 592.5 L116.0 594.9 L116.7 592.7 L117.0 594.9 L120.1 592.7 L117.6 595.6 L122.6 595.6 L119.7 596.3 L121.7 597.0 L119.6 596.8 L122.8 597.7 L117.5 596.7 L118.7 598.4 L116.6 597.4 L114.4 600.8 L115.6 597.1 L112.7 598.6 L115.2 596.5 L112.9 596.2 L115.2 595.6Z" fill="#d6d37a"/><path d="M118.8 599.8L118.8 619L123 615L126 621L129 619.8L126.2 614L132.2 613.8Z" fill="rgba(0,0,0,0.3)"/><path d="M116.5 597L116.5 619L121.2 614.6L124.2 621L127.2 619.6L125.2 613.2L130.6 612.3Z" fill="#fff" stroke="#111" stroke-width="1.1" stroke-linejoin="round"/></svg>
</body></html>
